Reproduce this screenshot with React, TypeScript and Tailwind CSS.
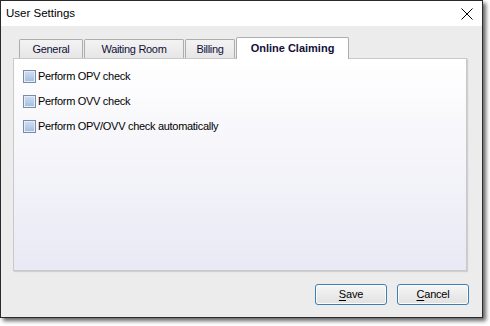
import React from "react";

const tabs = [
  { label: "General", w: "w-[64px]", ml: "ml-0" },
  { label: "Waiting Room", w: "w-[100px]", ml: "ml-[1px]" },
  { label: "Billing", w: "w-[50px]", ml: "ml-[1px]" },
];

const options = ["Perform OPV check", "Perform OVV check", "Perform OPV/OVV check automatically"];

function Checkbox() {
  return (
    <span className="flex h-[13px] w-[13px] shrink-0 items-center justify-center border border-[#7b8ba4] bg-white">
      <span className="h-[11px] w-[11px] border border-[#e4eef9] bg-gradient-to-b from-[#cbdcf1] to-[#a6c0e2]" />
    </span>
  );
}

function DialogButton({ accel, rest }: { accel: string; rest: string }) {
  return (
    <button className="flex h-[21px] w-[72px] items-center justify-center rounded-[3px] border border-[#3c7fb1] bg-gradient-to-b from-[#f6f6f6] to-[#e1e1e1] text-[11px] tracking-[-0.2px] text-black shadow-[inset_0_0_0_1px_#fcfcfc]">
      <span>
        <span className="underline underline-offset-[2px]">{accel}</span>
        {rest}
      </span>
    </button>
  );
}

export default function App() {
  return (
    <div className="h-[326px] w-[490px] bg-white font-['Liberation_Sans',Arial,sans-serif]">
      <div className="flex h-[318px] w-[483px] flex-col border border-[#2a2a2a] shadow-[3px_3px_4px_rgba(0,0,0,0.6)]">
        {/* title bar */}
        <div className="flex h-[25px] shrink-0 items-center justify-between bg-white pl-[5px] pr-[9px]">
          <span className="text-[11.5px] text-black">User Settings</span>
          <svg width="12" height="12" viewBox="0 0 12 12" className="text-black">
            <path d="M0.5 0.5 L11.5 11.5 M11.5 0.5 L0.5 11.5" stroke="currentColor" strokeWidth="1" fill="none" />
          </svg>
        </div>

        {/* body */}
        <div className="flex flex-1 flex-col bg-[#ececec] pl-[12px] pr-[15px] pt-[11px]">
          <div className="flex h-[21px] items-end pl-[6px]">
            {tabs.map((t) => (
              <div
                key={t.label}
                className={`${t.w} ${t.ml} flex h-[19px] items-center justify-center rounded-t-[2px] border border-b-0 border-[#adadad] bg-gradient-to-b from-[#f3f3f3] to-[#e6e6e6] text-[11px] tracking-[-0.3px] text-[#10103a]`}
              >
                {t.label}
              </div>
            ))}
            <div className="relative z-10 mb-[-1px] ml-[1px] flex h-[22px] w-[113px] items-center justify-center rounded-t-[2px] border border-b-0 border-[#adadad] bg-white pb-[1px] text-[11px] font-bold text-[#10103a]">
              Online Claiming
            </div>
          </div>

          <div className="flex h-[213px] flex-col border border-[#c9c9c9] bg-gradient-to-b from-white to-[#e9e9f5] pl-[9px] pt-[5px] shadow-[1px_1px_1px_rgba(0,0,0,0.12)]">
            {options.map((o) => (
              <div key={o} className="flex h-[25px] items-center">
                <Checkbox />
                <span className="ml-[2px] text-[11px] tracking-[-0.3px] text-black">{o}</span>
              </div>
            ))}
          </div>

          <div className="mr-[-2px] mt-[13px] flex justify-end gap-[10px]">
            <DialogButton accel="S" rest="ave" />
            <DialogButton accel="C" rest="ancel" />
          </div>
        </div>
      </div>
    </div>
  );
}
